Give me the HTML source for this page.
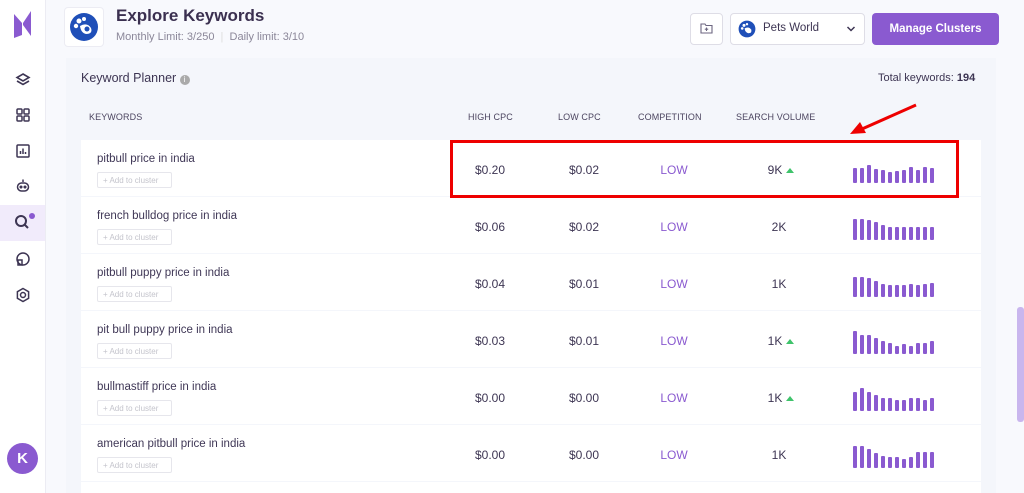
<!DOCTYPE html>
<html style="width:1024px;height:493px;overflow:hidden"><head><meta charset="utf-8"><style>
*{margin:0;padding:0;box-sizing:border-box}
body{width:1024px;height:493px;overflow:hidden;background:#f8f9fd;font-family:"Liberation Sans",sans-serif;position:relative;color:#3d3553}
.abs{position:absolute}
.side{left:0;top:0;width:46px;height:493px;background:#fff;border-right:1px solid #ececf3}
.ic{position:absolute;left:15px;width:16px;height:16px}
.card{left:66px;top:58px;width:930px;height:435px;background:#f4f6fb}
.row{position:absolute;left:81px;width:900px;height:56px;background:#fff}
.kw{position:absolute;left:16px;top:13px;font-size:11.5px;color:#3f3756}
.btn{position:absolute;left:16px;top:32px;width:75px;height:16px;border:1px solid #e6e6ec;border-radius:2px;font-size:8px;color:#c4c4cc;padding:3px 0 0 5px}
.v{position:absolute;top:23px;font-size:12px;color:#3d3553;width:80px;text-align:center}
.low{color:#8a5ad0}
.tri{display:inline-block;width:0;height:0;border-left:4px solid transparent;border-right:4px solid transparent;border-bottom:5px solid #3fc36b;margin-left:4px;vertical-align:1px}
.th{position:absolute;top:112px;font-size:9px;color:#4c4560;letter-spacing:.1px}
.bars{position:absolute;left:772px;top:12px;height:31px;width:90px}
.bars i{position:absolute;bottom:0;width:3.5px;background:#8a5ad0;border-radius:1px}
</style></head><body>
<div class="abs side">
  <svg class="abs" style="left:14px;top:11px" width="17" height="27" viewBox="0 0 17 27"><path d="M0 3 L8 12 L0 14Z M0 14 L8 12 L8 24 L0 27Z" fill="#8a5ad0"/><path d="M9 12 L17 0 L17 25 L9 14Z" fill="#8a5ad0"/></svg>
  <svg class="ic" style="top:72px" viewBox="0 0 16 16" fill="none" stroke="#3d3553" stroke-width="1.6"><path d="M8 2 L14 5.5 L8 9 L2 5.5Z M2 9 L8 12.5 L14 9"/></svg>
  <svg class="ic" style="top:107px" viewBox="0 0 16 16" fill="none" stroke="#3d3553" stroke-width="1.5"><rect x="2" y="2" width="5" height="5" rx="1"/><rect x="9" y="2" width="5" height="5" rx="1"/><rect x="2" y="9" width="5" height="5" rx="1"/><rect x="9" y="9" width="5" height="5" rx="1"/></svg>
  <svg class="ic" style="top:143px" viewBox="0 0 16 16" fill="none" stroke="#3d3553" stroke-width="1.5"><rect x="2" y="2" width="12" height="12" rx="1"/><path d="M5.5 11V8 M8 11V5.5 M10.5 11V9"/></svg>
  <svg class="ic" style="top:178px" viewBox="0 0 16 16" fill="none" stroke="#3d3553" stroke-width="1.5"><path d="M8 1.5V4"/><rect x="2.5" y="5" width="11" height="8" rx="4"/><circle cx="6" cy="9" r=".8" fill="#3d3553"/><circle cx="10" cy="9" r=".8" fill="#3d3553"/></svg>
  <div class="abs" style="left:0;top:205px;width:45px;height:36px;background:#f1ebfb"></div>
  <svg class="ic" style="top:214px;left:14px" viewBox="0 0 16 16" fill="none" stroke="#3d3553" stroke-width="2"><circle cx="7" cy="7" r="5"/><path d="M11 11 L14 14"/></svg>
  <div class="abs" style="left:29px;top:213px;width:6px;height:6px;border-radius:50%;background:#8a5ad0"></div>
  <svg class="ic" style="top:251px" viewBox="0 0 16 16" fill="none" stroke="#3d3553" stroke-width="1.5"><circle cx="8" cy="8" r="6"/><rect x="3" y="9" width="4" height="5"/></svg>
  <svg class="ic" style="top:287px" viewBox="0 0 16 16" fill="none" stroke="#3d3553" stroke-width="1.5"><path d="M8 1.5 L13.6 4.7 V11.3 L8 14.5 L2.4 11.3 V4.7Z"/><circle cx="8" cy="8" r="2.5"/></svg>
  <div class="abs" style="left:7px;top:443px;width:31px;height:31px;border-radius:50%;background:#8a5ad0;color:#fff;font-weight:bold;font-size:15px;text-align:center;line-height:31px">K</div>
</div>
<div class="abs" style="left:64px;top:7px;width:40px;height:40px;background:#fff;border:1px solid #ececf3;border-radius:4px"></div>
<svg class="abs" style="left:69px;top:12px" width="30" height="30" viewBox="0 0 30 30"><circle cx="15" cy="15" r="14" fill="#1f4fb8"/><circle cx="10" cy="9" r="2.5" fill="#fff"/><circle cx="15" cy="7" r="2" fill="#fff"/><circle cx="7" cy="14" r="2.2" fill="#fff"/><path d="M11 14 Q18 10 22 16 Q24 22 17 22 Q12 21 11 14Z" fill="#fff"/><circle cx="18" cy="17" r="2.5" fill="#1f4fb8"/></svg>
<div class="abs" style="left:116px;top:6px;font-size:17px;font-weight:bold;color:#3b3050">Explore Keywords</div>
<div class="abs" style="left:116px;top:31px;font-size:11px;color:#8b8799">Monthly Limit: 3/250 <span style="color:#ddd">&nbsp;|&nbsp;</span> Daily limit: 3/10</div>
<div class="abs" style="left:690px;top:13px;width:33px;height:32px;background:#fff;border:1px solid #dedde6;border-radius:4px"></div>
<svg class="abs" style="left:700px;top:22px" width="13" height="12" viewBox="0 0 13 12" fill="none" stroke="#6c6680" stroke-width="1.1"><path d="M1 2 H5 L6 3.5 H12 V11 H1Z M6.5 5.5 V9 M4.8 7.2 H8.2"/></svg>
<div class="abs" style="left:730px;top:13px;width:135px;height:32px;background:#fff;border:1px solid #dedde6;border-radius:4px"></div>
<svg class="abs" style="left:738px;top:20px" width="18" height="18" viewBox="0 0 30 30"><circle cx="15" cy="15" r="14" fill="#1f4fb8"/><circle cx="10" cy="9" r="2.5" fill="#fff"/><circle cx="15" cy="7" r="2" fill="#fff"/><circle cx="7" cy="14" r="2.2" fill="#fff"/><path d="M11 14 Q18 10 22 16 Q24 22 17 22 Q12 21 11 14Z" fill="#fff"/></svg>
<div class="abs" style="left:763px;top:22px;font-size:11.5px;color:#3d3553">Pets World</div>
<svg class="abs" style="left:846px;top:25px" width="10" height="8" viewBox="0 0 10 8" fill="none" stroke="#3d3553" stroke-width="1.5"><path d="M1.5 2 L5 5.5 L8.5 2"/></svg>
<div class="abs" style="left:872px;top:13px;width:127px;height:32px;background:#8a5ad0;border-radius:4px;color:#fff;font-weight:bold;font-size:11.5px;text-align:center;line-height:32px">Manage Clusters</div>
<div class="abs card"></div>
<div class="abs" style="left:81px;top:71px;font-size:12.5px;color:#3d3553">Keyword Planner <span style="display:inline-block;width:10px;height:10px;border-radius:50%;background:#aaa;color:#fff;font-size:8px;text-align:center;line-height:10px;vertical-align:0">i</span></div>
<div class="abs" style="left:878px;top:72px;font-size:11px;color:#3d3553">Total keywords: <b>194</b></div>
<div class="th" style="left:89px">KEYWORDS</div>
<div class="th" style="left:468px">HIGH CPC</div>
<div class="th" style="left:558px">LOW CPC</div>
<div class="th" style="left:638px">COMPETITION</div>
<div class="th" style="left:736px">SEARCH VOLUME</div>
<div id="rows"></div>
<div class="abs" style="left:1017px;top:307px;width:7px;height:115px;background:#c9b6ee;border-radius:3px"></div>
<div class="abs" style="left:450px;top:140px;width:509px;height:58px;border:3px solid #ee0000"></div>
<svg class="abs" style="left:840px;top:98px" width="90" height="45" viewBox="0 0 90 45"><path d="M76 7 L22 31" stroke="#ee0000" stroke-width="3"/><path d="M10 36 L20 24 L26 35Z" fill="#ee0000"/></svg>
<script>
var d=[["pitbull price in india","$0.20","$0.02","9K",1,[15,15,18,14,13,11,12,13,16,13,16,15]],
["french bulldog price in india","$0.06","$0.02","2K",0,[21,21,20,18,15,13,13,13,13,13,13,13]],
["pitbull puppy price in india","$0.04","$0.01","1K",0,[20,20,19,16,13,12,12,12,13,12,13,14]],
["pit bull puppy price in india","$0.03","$0.01","1K",1,[23,19,19,16,13,11,8,10,8,11,11,13]],
["bullmastiff price in india","$0.00","$0.00","1K",1,[19,23,19,16,13,13,11,11,13,13,11,13]],
["american pitbull price in india","$0.00","$0.00","1K",0,[22,22,19,15,12,11,11,9,11,16,16,16]],
["","","","",0,[]]];
var h='';d.forEach(function(r,i){var t=140+57*i;h+='<div class="row" style="top:'+t+'px;'+(i==6?'height:11px':'')+'">';
if(r[0]){h+='<div class="kw">'+r[0]+'</div><div class="btn">+ Add to cluster</div><div class="v" style="left:369px">'+r[1]+'</div><div class="v" style="left:463px">'+r[2]+'</div><div class="v low" style="left:553px">LOW</div><div class="v" style="left:'+(r[4]?660:658)+'px">'+r[3]+(r[4]?'<span class="tri"></span>':'')+'</div><div class="bars">';
r[5].forEach(function(b,j){h+='<i style="left:'+(j*7)+'px;height:'+b+'px"></i>'});h+='</div>';}
h+='</div>'});document.getElementById('rows').innerHTML=h;
</script>
</body></html>
